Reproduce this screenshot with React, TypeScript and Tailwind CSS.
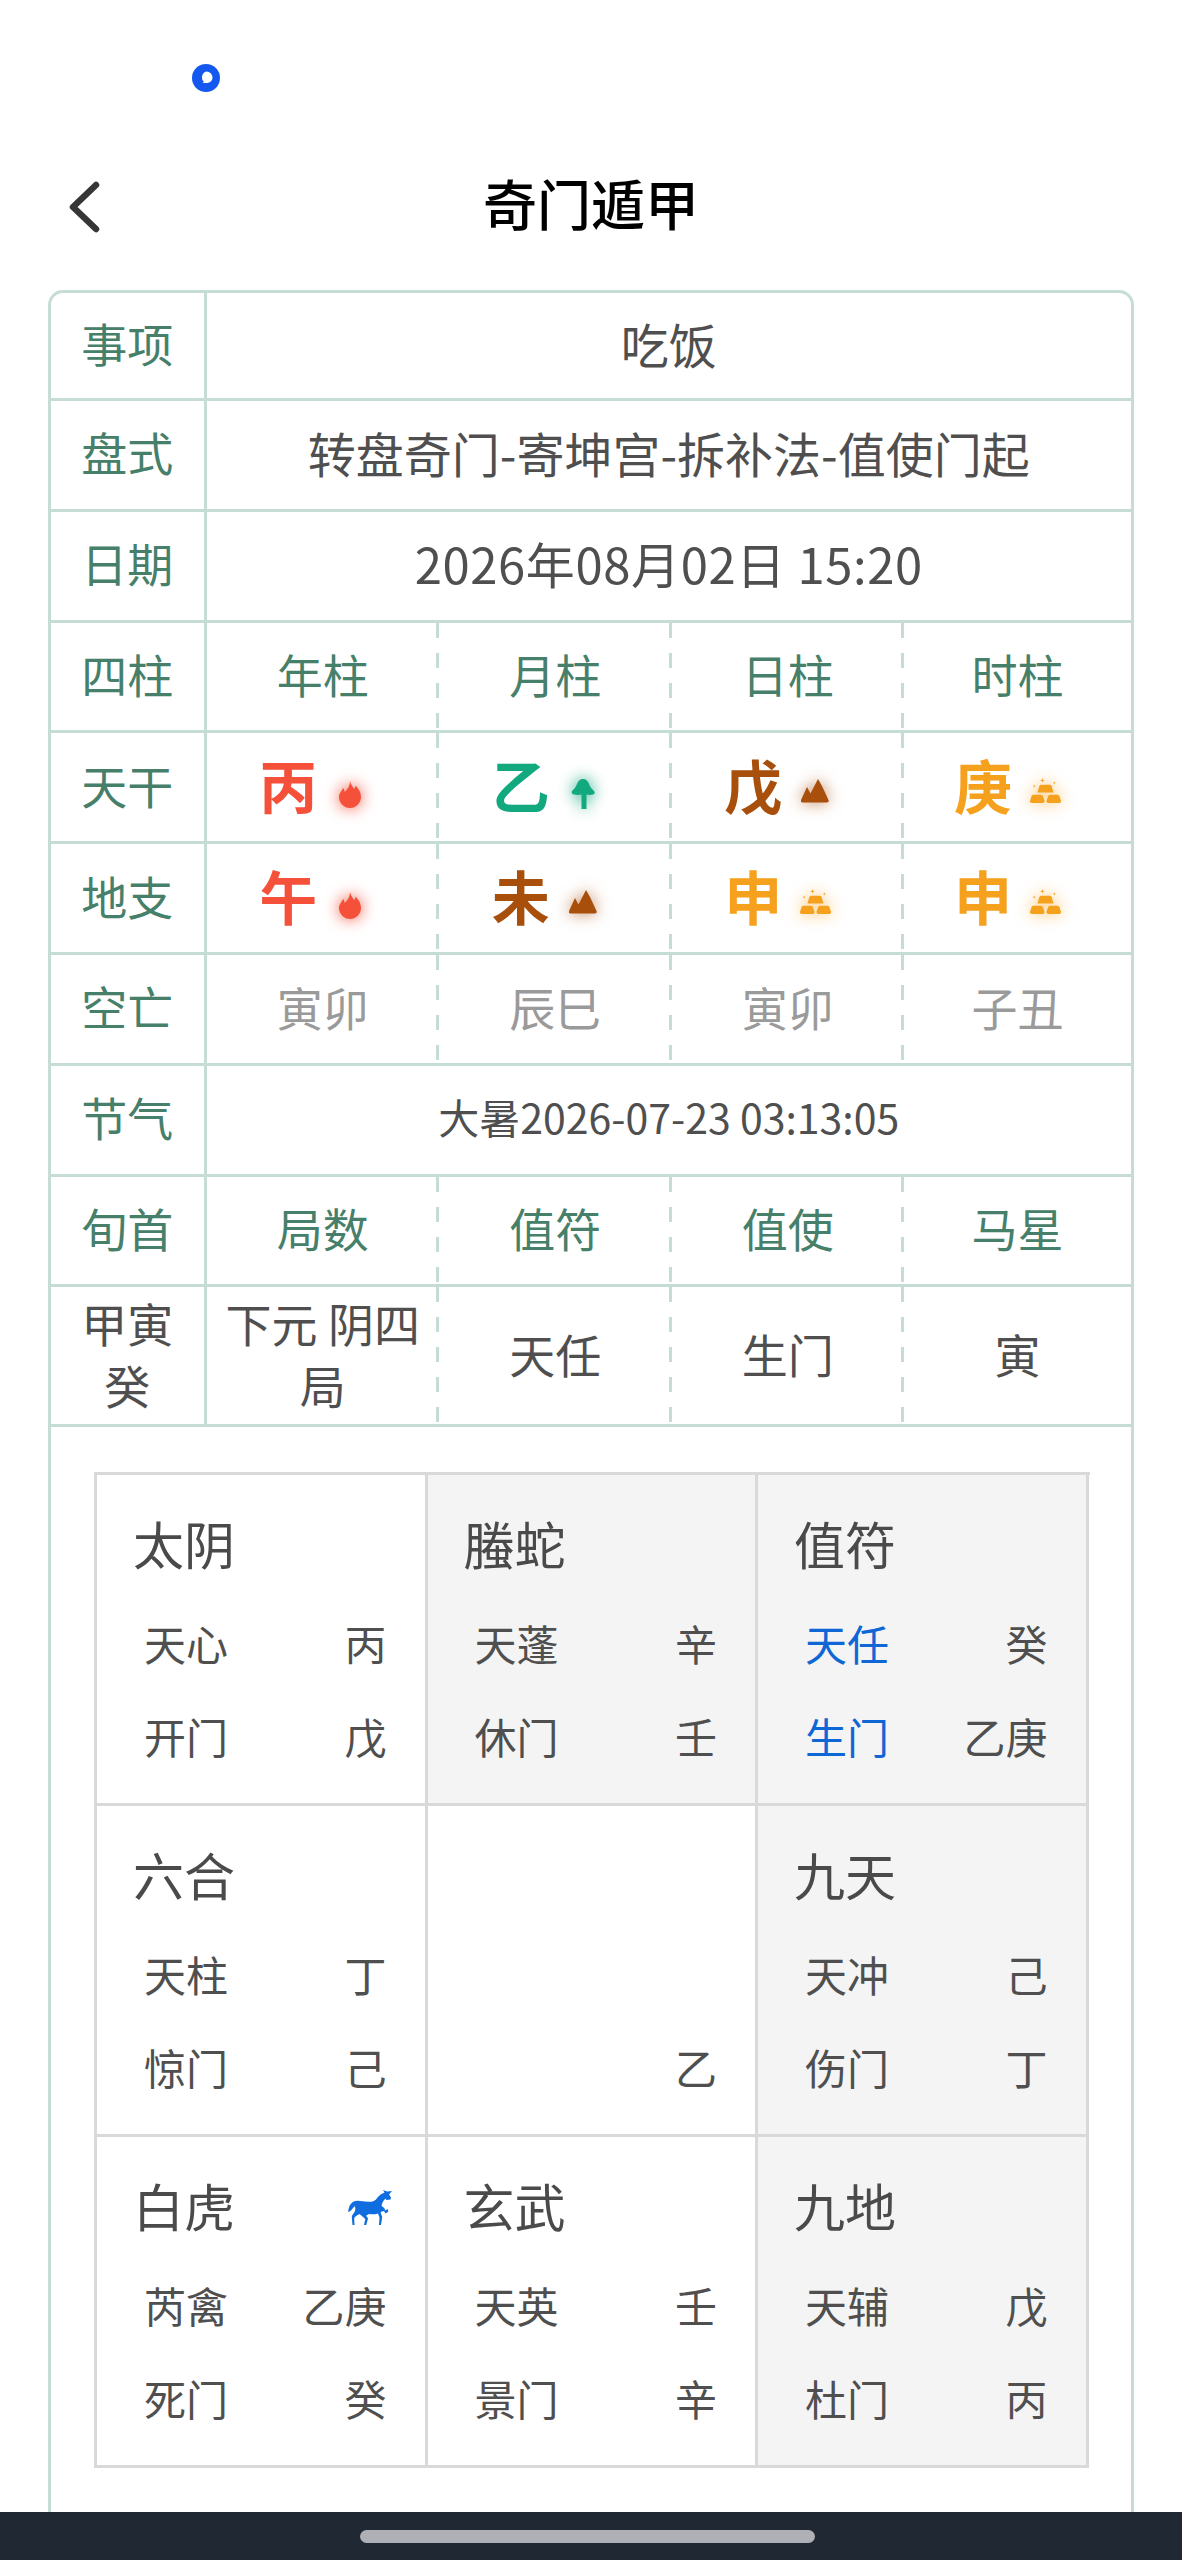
import React from "react";

const FONT = "[font-family:'Noto_Sans_CJK_SC','Noto_Sans',sans-serif]";
const LINE = "border-[#c6ddd6]";
const DASH = "bg-[linear-gradient(to_bottom,#c6ddd6_50%,transparent_50%)] bg-[length:3px_30px] bg-[position:right_top] bg-repeat-y";

const Fire = () => (
  <svg width="22" height="27" viewBox="0 0 22 27" className="mt-[20px] drop-shadow-[0_0_8px_#f4503a]">
    <path fill="#f4503a" d="M11 0c1 4 3 6 4 8 1-1 1.500-2 1.500-3.500C20 8 22 12 22 16c0 6-5 11-11 11S0 22 0 16c0-4 3-6 4-9 1 1 1.500 2.500 1.500 4C8 9 11 5 11 0z" />
  </svg>
);
const Tree = () => (
  <svg width="24" height="30" viewBox="0 0 24 30" className="mt-[20px] drop-shadow-[0_0_8px_#12a97f]">
    <path fill="#12a97f" d="M12 0c3 0 5 2 6 5 1 3 3 5 5 7 1 1.500 1 3-1 3.500-2 .5-4 .5-6.500 0V30h-5V15.500C8 16 6 16 3 15.500c-2-.5-3-2-2-3.500 2-2 4-4 5-7 1-3 3-5 6-5z" />
  </svg>
);
const Mountain = () => (
  <svg width="28" height="24" viewBox="0 0 28 24" className="mt-[14px] drop-shadow-[0_0_8px_rgba(168,79,12,0.7)]">
    <path fill="#a84f0c" d="M17 0l4 7 6.500 14c.5 1.500 0 2.500-1.500 2.500H1.500C0 23.500-.500 22.500 0 21L6 8l3.500 6.500z" />
  </svg>
);
const Gold = () => (
  <svg width="31" height="25" viewBox="0 0 30 24" className="mt-[12px] drop-shadow-[0_0_8px_rgba(246,161,30,0.7)]">
    <g fill="#f6a11e">
      <path d="M11 6.500h8c1 0 1.500.5 2 1.500l1.800 6H7.200L9 8c.5-1 1-1.500 2-1.500z" />
      <path d="M3.500 16h7c1 0 1.500.5 2 1.500l1.500 4.500c.3 1-.3 2-1.500 2H1.500C.300 24-.300 23 0 22l1.500-4.500c.5-1 1-1.500 2-1.500z" />
      <path d="M19.500 16h7c1 0 1.500.5 2 1.500L30 22c.3 1-.3 2-1.500 2h-11c-1.200 0-1.800-1-1.500-2l1.500-4.500c.5-1 1-1.500 2-1.500z" />
      <path d="M12 0l.5 1.700 1.700.5-1.700.5-.5 1.700-.5-1.700-1.700-.5 1.700-.5zM23.500 3l.4 1.300 1.300.4-1.300.4-.4 1.300-.4-1.300-1.300-.4 1.300-.4zM4 6l.4 1.300 1.300.4-1.300.4L4 9.400l-.4-1.300-1.300-.4 1.300-.4z" />
    </g>
  </svg>
);
const Horse = () => (
  <svg width="44" height="35" viewBox="0 0 44 35" className="mt-[5px]">
    <path
      fill="#0f6ddf"
      d="M44 1l-5 .5L35 0l1.500 2.500C32 4 30 7 28 9.500c-2 2-5 2.500-8 2.200L12 11C7 10.300 3.500 12 1.500 16 .8 18 .3 20 0 22c2-.5 3.500-1.800 5-4l1.800-2c.7 2 .7 4-.2 6-1.700 2-2.800 3.300-2.800 5.500L4.500 35h2l-.3-6.500c.6-2 2.800-3.300 5.300-4.500l3 2.500 2.800 2.500L16 35h2.200l1.700-6c.1-1-.5-2-1.900-3.300L21 24c3 .5 6 .5 9-.5l1.500 4-.5 7.500h2l1.200-8-1.700-5 3.500-1 1.500 2.500 2.800-1.700-.6-2.800-2.600 1.500-.4-1.800C35.500 17 34.500 17 33.500 16c.5-3 2-6 4-7.500l1 1.500 4-.5.500-2-2-3z"
    />
  </svg>
);

function Label({ children }: { children: React.ReactNode }) {
  return (
    <div className={`border-r-[3px] border-b-[3px] ${LINE} pb-[6px] flex items-center justify-center text-[46px] text-[#47806a]`}>
      {children}
    </div>
  );
}

function Wide({ children, cls }: { children: React.ReactNode; cls?: string }) {
  return (
    <div className={`col-span-4 border-b-[3px] ${LINE} pb-[6px] flex items-center justify-center ${cls ?? "text-[48px]"} text-[#4f4f4f]`}>
      {children}
    </div>
  );
}

function Cell({ children, cls = "text-[#4f4f4f]", last }: { children: React.ReactNode; cls?: string; last?: boolean }) {
  return (
    <div className={`border-b-[3px] ${LINE} ${last ? "" : DASH} pb-[6px] flex items-center justify-center text-center text-[46px] leading-[62px] ${cls}`}>
      {children}
    </div>
  );
}

function Stem({ ch, color, icon, last }: { ch: string; color: string; icon: React.ReactNode; last?: boolean }) {
  return (
    <div className={`border-b-[3px] ${LINE} ${last ? "" : DASH} pb-[6px] pr-[3px] flex items-center justify-center`}>
      <span className={`w-[58px] text-center text-[58px] font-bold leading-none ${color}`}>{ch}</span>
      <span className="w-[66px] flex items-center justify-center">{icon}</span>
    </div>
  );
}

type Palace = {
  title?: string;
  horse?: boolean;
  a?: [string, string];
  b?: [string, string];
  shade?: boolean;
  blue?: boolean;
};

const palaces: Palace[] = [
  { title: "太阴", a: ["天心", "丙"], b: ["开门", "戊"] },
  { title: "螣蛇", a: ["天蓬", "辛"], b: ["休门", "壬"], shade: true },
  { title: "值符", a: ["天任", "癸"], b: ["生门", "乙庚"], shade: true, blue: true },
  { title: "六合", a: ["天柱", "丁"], b: ["惊门", "己"] },
  { b: ["", "乙"] },
  { title: "九天", a: ["天冲", "己"], b: ["伤门", "丁"], shade: true },
  { title: "白虎", horse: true, a: ["芮禽", "乙庚"], b: ["死门", "癸"] },
  { title: "玄武", a: ["天英", "壬"], b: ["景门", "辛"] },
  { title: "九地", a: ["天辅", "戊"], b: ["杜门", "丙"], shade: true },
];

function SubRow({ row, blue }: { row?: [string, string]; blue?: boolean }) {
  return (
    <div className="h-[93px] pl-[47px] pr-[38px] flex items-center justify-between text-[42px] text-[#4f4f4f]">
      <span className={blue ? "text-[#0f67d6]" : ""}>{row?.[0]}</span>
      <span>{row?.[1]}</span>
    </div>
  );
}

function PalaceCell({ p }: { p: Palace }) {
  return (
    <div className={`border-r-[3px] border-b-[3px] border-[#d9d9d9] pt-[21px] ${p.shade ? "bg-[#f4f4f4]" : "bg-white"}`}>
      <div className="h-[93px] pl-[36px] pr-[33px] mb-[7px] flex items-center justify-between text-[51px] text-[#4a4a4a]">
        <span>{p.title}</span>
        {p.horse && <Horse />}
      </div>
      <SubRow row={p.a} blue={p.blue} />
      <SubRow row={p.b} blue={p.blue} />
    </div>
  );
}

export default function App() {
  return (
    <div className={`relative w-[1182px] h-[2560px] overflow-hidden bg-white ${FONT}`}>
      <div className="h-[140px] pl-[192px] pt-[64px]">
        <svg width="28" height="28" viewBox="0 0 28 28">
          <circle cx="14" cy="14" r="14" fill="#1558f0" />
          <path d="M14.500 7.500a6 6 0 0 1 6 6c0 3.300-2.700 5.500-6 5.500h-4l1.500-1.200a6 6 0 0 1 2.500-10.300z" fill="#fff" />
        </svg>
      </div>

      <div className="relative h-[150px] flex items-start justify-center">
        <svg width="40" height="54" viewBox="0 0 40 54" className="absolute left-[63px] top-[40px]">
          <path d="M33 5L10 27l23 22" fill="none" stroke="#363636" strokeWidth="6.500" strokeLinecap="round" strokeLinejoin="round" />
        </svg>
        <div className="mt-[28px] text-[54px] leading-[70px] font-medium text-black">奇门遁甲</div>
      </div>

      <div className={`mx-[48px] w-[1086px] border-[3px] ${LINE} rounded-[15px]`}>
        <div className="grid grid-cols-[155.500px_232.500px_232.500px_232.500px_1fr] grid-rows-[108px_repeat(8,110.800px)_140px]">
          <Label>事项</Label>
          <Wide>吃饭</Wide>
          <Label>盘式</Label>
          <Wide>转盘奇门-寄坤宫-拆补法-值使门起</Wide>
          <Label>日期</Label>
          <Wide cls="text-[49px] tracking-[0.6px]">2026年08月02日 15:20</Wide>

          <Label>四柱</Label>
          <Cell cls="text-[#47806a]">年柱</Cell>
          <Cell cls="text-[#47806a]">月柱</Cell>
          <Cell cls="text-[#47806a]">日柱</Cell>
          <Cell cls="text-[#47806a]" last>时柱</Cell>

          <Label>天干</Label>
          <Stem ch="丙" color="text-[#f4503a]" icon={<Fire />} />
          <Stem ch="乙" color="text-[#12a97f]" icon={<Tree />} />
          <Stem ch="戊" color="text-[#a84f0c]" icon={<Mountain />} />
          <Stem ch="庚" color="text-[#f6a11e]" icon={<Gold />} last />

          <Label>地支</Label>
          <Stem ch="午" color="text-[#f4503a]" icon={<Fire />} />
          <Stem ch="未" color="text-[#a84f0c]" icon={<Mountain />} />
          <Stem ch="申" color="text-[#f6a11e]" icon={<Gold />} />
          <Stem ch="申" color="text-[#f6a11e]" icon={<Gold />} last />

          <Label>空亡</Label>
          <Cell cls="text-[#9a9a9a]">寅卯</Cell>
          <Cell cls="text-[#9a9a9a]">辰巳</Cell>
          <Cell cls="text-[#9a9a9a]">寅卯</Cell>
          <Cell cls="text-[#9a9a9a]" last>子丑</Cell>

          <Label>节气</Label>
          <Wide cls="text-[41px]">大暑2026-07-23 03:13:05</Wide>

          <Label>旬首</Label>
          <Cell cls="text-[#47806a]">局数</Cell>
          <Cell cls="text-[#47806a]">值符</Cell>
          <Cell cls="text-[#47806a]">值使</Cell>
          <Cell cls="text-[#47806a]" last>马星</Cell>

          <div className={`border-r-[3px] border-b-[3px] ${LINE} pb-[6px] flex items-center justify-center text-center text-[46px] leading-[62px] text-[#4f4f4f] px-[2px]`}>
            甲寅
            <br />
            癸
          </div>
          <Cell>
            <span>
              下元 阴四
              <br />局
            </span>
          </Cell>
          <Cell>天任</Cell>
          <Cell>生门</Cell>
          <Cell last>寅</Cell>
        </div>

        <div className="pt-[45px] pl-[43px] pb-[60px]">
          <div className="w-[996px] grid grid-cols-[repeat(3,330.500px)] grid-rows-[repeat(3,331px)] border-t-[3px] border-l-[3px] border-[#d9d9d9]">
            {palaces.map((p, i) => (
              <PalaceCell key={i} p={p} />
            ))}
          </div>
        </div>
      </div>

      <div className="absolute left-0 right-0 bottom-0 h-[48px] bg-[#202833] flex items-center justify-center">
        <div className="w-[455px] h-[13px] mr-[7px] rounded-full bg-[#aeb0b5]" />
      </div>
    </div>
  );
}
